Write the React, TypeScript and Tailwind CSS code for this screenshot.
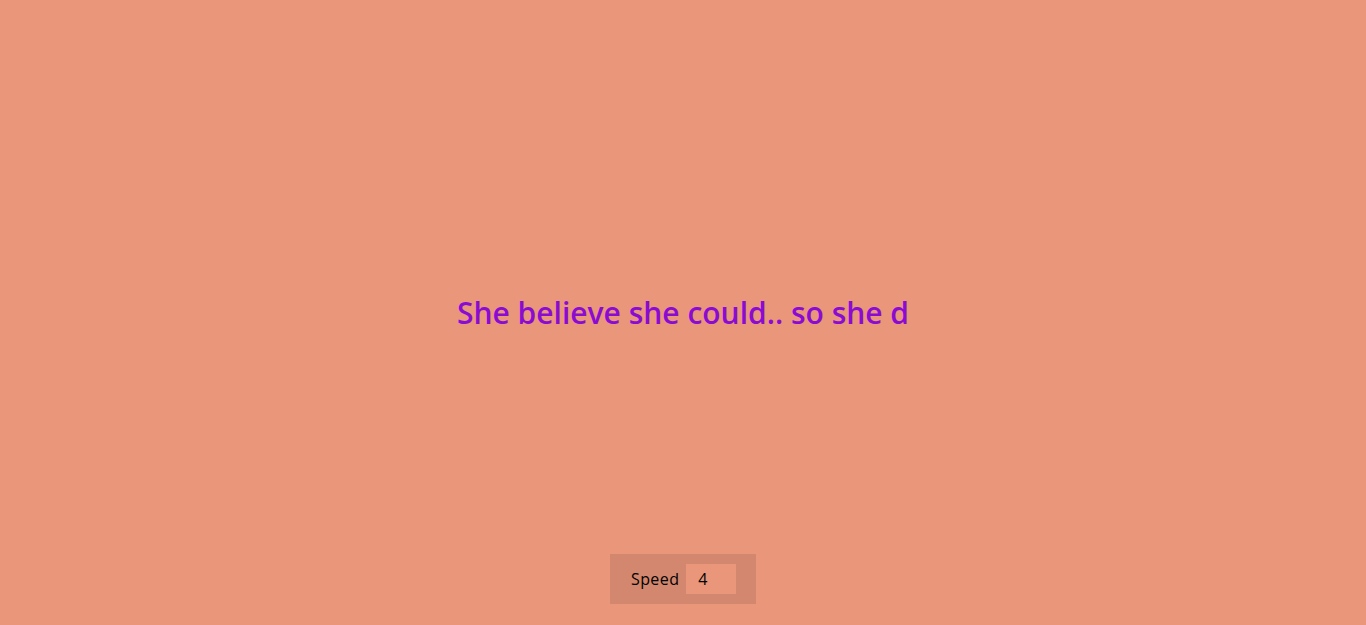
export default function App() {
  return (
    <div className="relative h-screen w-full bg-[#ea967a] flex items-center justify-center font-['Open_Sans',sans-serif]">
      <h1 className="text-[30px] font-semibold text-[#8a0bd2] leading-none">
        She believe she could.. so she d
      </h1>

      <div className="absolute bottom-[21px] left-1/2 -translate-x-1/2 w-[146px] h-[50px] bg-[#d3876e] flex items-center pl-[21px] gap-[7px]">
        <label htmlFor="speed" className="text-[16px] text-black tracking-[0.4px]">
          Speed
        </label>
        <input
          id="speed"
          type="number"
          defaultValue={4}
          className="w-[50px] h-[30px] bg-[#ea967a] pl-3 text-[16px] text-black outline-none"
        />
      </div>
    </div>
  );
}
